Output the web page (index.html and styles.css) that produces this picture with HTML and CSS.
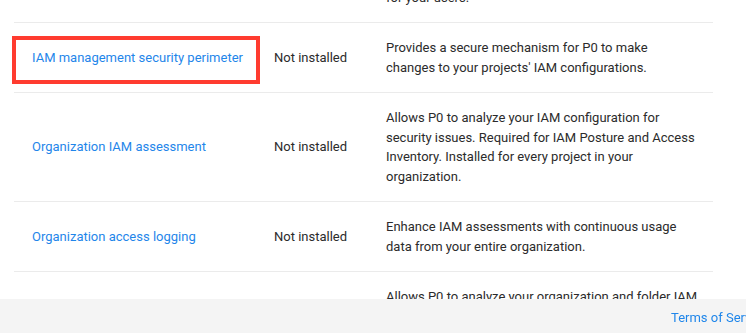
FILE: index.html
```html
<!DOCTYPE html>
<html>
<head>
    <meta charset="UTF-8">
    <meta name="viewport" content="width=device-width, initial-scale=1.0">
    <title>Installation</title>
    <link rel="stylesheet" href="styles.css">
</head>
<body>
    <div class="page">
        <div class="table">
            <div class="row">
                <div class="cell cell__name"><a class="link" href="#">User provisioning</a></div>
                <div class="cell cell__status">Not installed</div>
                <div class="cell cell__desc">Allows P0 to provision and deprovision access<br>for your users.</div>
            </div>
            <div class="row">
                <div class="cell cell__name cell__marked"><a class="link" href="#">IAM management security perimeter</a></div>
                <div class="cell cell__status">Not installed</div>
                <div class="cell cell__desc">Provides a secure mechanism for P0 to make changes to your projects' IAM configurations.</div>
            </div>
            <div class="row">
                <div class="cell cell__name"><a class="link" href="#">Organization IAM assessment</a></div>
                <div class="cell cell__status">Not installed</div>
                <div class="cell cell__desc">Allows P0 to analyze your IAM configuration for security issues. Required for IAM Posture and Access Inventory. Installed for every project in your organization.</div>
            </div>
            <div class="row">
                <div class="cell cell__name"><a class="link" href="#">Organization access logging</a></div>
                <div class="cell cell__status">Not installed</div>
                <div class="cell cell__desc">Enhance IAM assessments with continuous usage data from your entire organization.</div>
            </div>
            <div class="row">
                <div class="cell cell__name"><a class="link" href="#">Organization folder assessment</a></div>
                <div class="cell cell__status">Not installed</div>
                <div class="cell cell__desc">Allows P0 to analyze your organization and folder IAM configuration for security issues.</div>
            </div>
        </div>
    </div>
    <div class="footer">
        <a class="link" href="#">Terms of Service</a>
    </div>
</body>
</html>
```

FILE: styles.css
```css
*, *::before, *::after {
    box-sizing: border-box;
}
html, body {
    margin: 0;
    height: 100%;
    overflow: hidden;
    background: #fff;
    font-family: 'Roboto', 'Liberation Sans', sans-serif;
    font-size: 13px;
    color: #2b2b2b;
}
.page {
    padding: 0 33px 0 14px;
    margin-top: -47px;
}
.row {
    display: grid;
    grid-template-columns: 242px 112px 1fr;
    border-bottom: 1px solid #ebebeb;
}
.cell {
    padding: 15px 18px 15px 18px;
    line-height: 19.5px;
    display: flex;
    align-items: center;
    white-space: nowrap;
}
.cell__desc {
    display: block;
    white-space: normal;
    padding-right: 15px;
}
.cell__marked {
    position: relative;
}
.cell__marked::after {
    content: "";
    position: absolute;
    left: -2px;
    top: 13px;
    width: 248px;
    height: 48px;
    border: 4px solid #ff3b2f;
}
.link {
    color: #1f86ea;
    text-decoration: none;
}
.footer {
    position: fixed;
    z-index: 2;
    left: 0;
    right: 0;
    bottom: 0;
    height: 34px;
    background: #f4f4f4;
    padding: 2px 0 0 671px;
    display: flex;
    align-items: center;
    white-space: nowrap;
}
```
